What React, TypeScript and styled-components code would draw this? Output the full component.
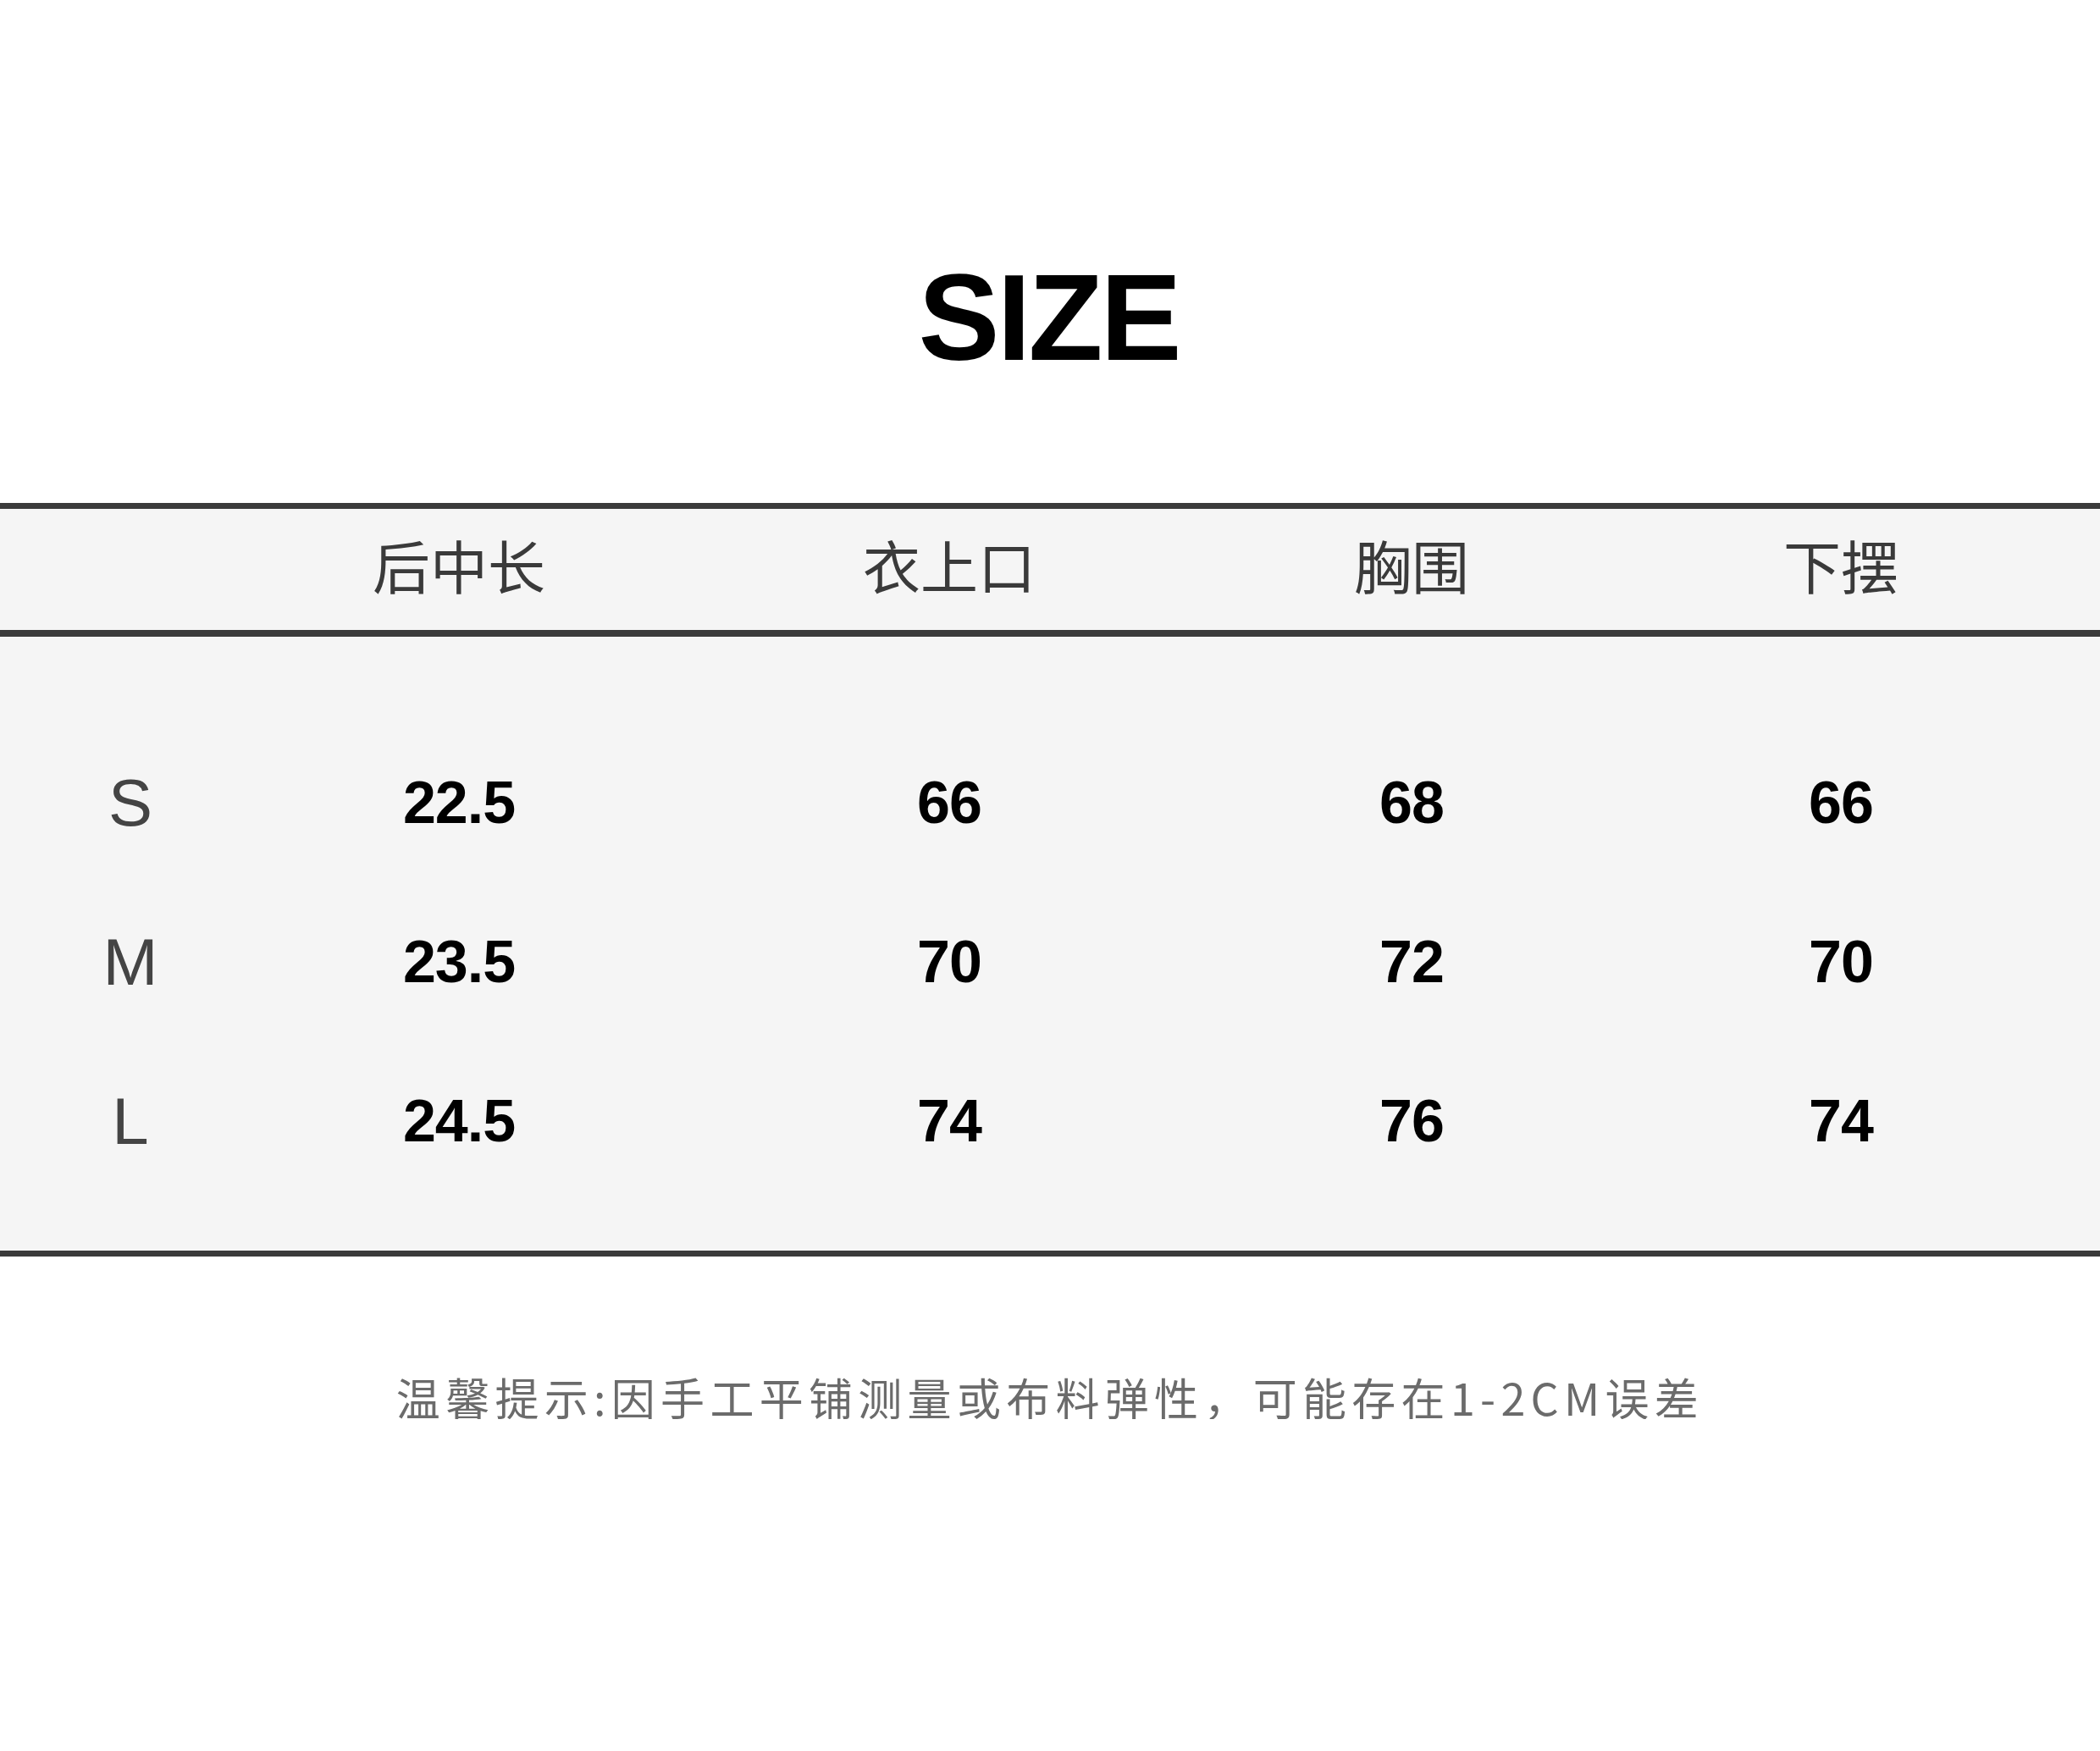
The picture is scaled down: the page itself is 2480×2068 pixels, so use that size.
import React from "react";
import styled, { createGlobalStyle } from "styled-components";

const GlobalStyle = createGlobalStyle`
  html, body {
    margin: 0;
    padding: 0;
    background: #ffffff;
  }
  body {
    font-family: "Liberation Sans", "Noto Sans CJK SC", sans-serif;
  }
`;

const Page = styled.div`
  width: 2480px;
  display: flex;
  flex-direction: column;
  align-items: stretch;
  background: #ffffff;
`;

const Title = styled.h1`
  margin: 0;
  padding-top: 304px;
  font-family: "Liberation Sans", Arial, sans-serif;
  font-weight: 700;
  font-size: 144px;
  line-height: 144px;
  letter-spacing: -3px;
  text-indent: -3px;
  color: #000000;
  text-align: center;
`;

const Table = styled.div`
  margin-top: 146px;
  background: #f5f5f5;
  border-top: 7px solid #3b3b3b;
  border-bottom: 7px solid #3b3b3b;
`;

const Row = styled.div<{ $height: number; $shift?: number }>`
  display: grid;
  grid-template-columns: 308px 468px 690px 402px 1fr;
  height: ${(p) => p.$height}px;
  align-items: center;
  padding-bottom: ${(p) => p.$shift ?? 0}px;
  box-sizing: border-box;
`;

const HeaderRow = styled(Row)`
  border-bottom: 8px solid #3b3b3b;
`;

const Body = styled.div`
  padding: 102px 0 59px;
  display: flex;
  flex-direction: column;
`;

const HeadCell = styled.div`
  text-align: center;
  font-family: "Noto Sans CJK SC", "Noto Sans", sans-serif;
  font-size: 68px;
  line-height: 68px;
  font-weight: 400;
  color: #3a3a3a;
`;

const LabelCell = styled.div`
  text-align: center;
  font-family: "Liberation Sans", Arial, sans-serif;
  font-size: 78px;
  line-height: 188px;
  font-weight: 400;
  color: #444444;
`;

const ValueCell = styled.div`
  text-align: center;
  font-family: "Liberation Sans", Arial, sans-serif;
  font-size: 70px;
  line-height: 188px;
  font-weight: 700;
  letter-spacing: -1px;
  color: #000000;
`;

const Note = styled.p`
  margin: 140px 0 0;
  text-align: center;
  font-family: "Noto Sans CJK SC", "Noto Sans", sans-serif;
  font-size: 52px;
  line-height: 52px;
  letter-spacing: 6.3px;
  color: #6b6b6b;
`;

const headers = ["后中长", "衣上口", "胸围", "下摆"];
const rows: { size: string; values: string[] }[] = [
  { size: "S", values: ["22.5", "66", "68", "66"] },
  { size: "M", values: ["23.5", "70", "72", "70"] },
  { size: "L", values: ["24.5", "74", "76", "74"] },
];

export default function App() {
  return (
    <>
      <GlobalStyle />
      <Page>
        <Title>SIZE</Title>
        <Table>
          <HeaderRow $height={151} $shift={12}>
            <HeadCell />
            {headers.map((h) => (
              <HeadCell key={h}>{h}</HeadCell>
            ))}
          </HeaderRow>
          <Body>
            {rows.map((r) => (
              <Row key={r.size} $height={188}>
                <LabelCell>{r.size}</LabelCell>
                {r.values.map((v, i) => (
                  <ValueCell key={i}>{v}</ValueCell>
                ))}
              </Row>
            ))}
          </Body>
        </Table>
        <Note>温馨提示:因手工平铺测量或布料弹性，可能存在1-2CM误差</Note>
      </Page>
    </>
  );
}
